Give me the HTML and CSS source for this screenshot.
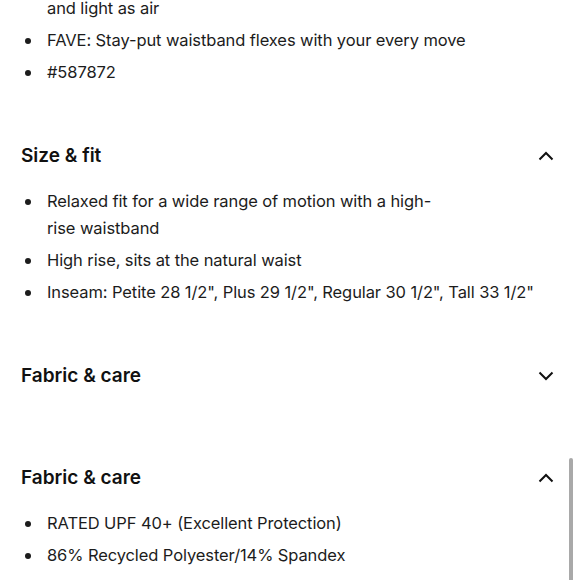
FILE: index.html
```html
<!DOCTYPE html>
<html lang="en">
<head>
<meta charset="utf-8">
<title>Product details</title>
<link rel="stylesheet" href="styles.css">
</head>
<body>
<div class="page">
  <ul class="bullets">
    <li class="cont">and light as air</li>
    <li>FAVE: Stay-put waistband flexes with your every move</li>
    <li>#587872</li>
  </ul>

  <section class="acc">
    <div class="acc-head">
      <h2>Size &amp; fit</h2>
      <svg class="chev" width="16" height="10" viewBox="0 0 16 10"><path d="M1.5 8.5 L8 2 L14.5 8.5" fill="none" stroke="#111" stroke-width="2"/></svg>
    </div>
    <ul class="bullets">
      <li class="narrow">Relaxed fit for a wide range of motion with a high-rise waistband</li>
      <li>High rise, sits at the natural waist</li>
      <li>Inseam: Petite 28 1/2", Plus 29 1/2", Regular 30 1/2", Tall 33 1/2"</li>
    </ul>
  </section>

  <section class="acc">
    <div class="acc-head">
      <h2>Fabric &amp; care</h2>
      <svg class="chev" width="16" height="10" viewBox="0 0 16 10"><path d="M1.5 1.5 L8 8 L14.5 1.5" fill="none" stroke="#111" stroke-width="2"/></svg>
    </div>
  </section>

  <section class="acc">
    <div class="acc-head">
      <h2>Fabric &amp; care</h2>
      <svg class="chev" width="16" height="10" viewBox="0 0 16 10"><path d="M1.5 8.5 L8 2 L14.5 8.5" fill="none" stroke="#111" stroke-width="2"/></svg>
    </div>
    <ul class="bullets">
      <li>RATED UPF 40+ (Excellent Protection)</li>
      <li>86% Recycled Polyester/14% Spandex</li>
      <li>Sweat-wicking, quick-drying fabric for outdoor adventures</li>
    </ul>
  </section>
</div>
<div class="scrollbar"></div>
</body>
</html>
```

FILE: styles.css
```css
html, body {
  margin: 0;
  padding: 0;
  background: #fff;
  overflow: hidden;
}
body {
  font-family: "Inter", "Liberation Sans", sans-serif;
  color: #1c1c1c;
  width: 580px;
  height: 580px;
  position: relative;
}
.page {
  margin-top: -5px;
  padding: 0 26px 0 21px;
}
.bullets {
  list-style: none;
  margin: 0;
  padding: 0 0 0 26px;
  font-size: 16.5px;
  line-height: 27px;
  letter-spacing: -0.1px;
}
.bullets li {
  position: relative;
}
.bullets li + li {
  margin-top: 5px;
}
.bullets li::before {
  content: "";
  position: absolute;
  left: -22px;
  top: 10.5px;
  width: 6px;
  height: 6px;
  border-radius: 50%;
  background: #1c1c1c;
}
.bullets li.cont::before {
  display: none;
}
.bullets li.narrow {
  max-width: 395px;
}
.acc-head {
  display: flex;
  align-items: center;
  justify-content: space-between;
  padding: 56px 0 18px;
}
.acc-head h2 {
  margin: 0;
  font-size: 19px;
  line-height: 28px;
  font-weight: 600;
  color: #111;
}
.chev {
  display: block;
}
.scrollbar {
  position: absolute;
  left: 569px;
  top: 458px;
  width: 4px;
  height: 140px;
  border-radius: 2px;
  background: #a9a9a9;
}
```
